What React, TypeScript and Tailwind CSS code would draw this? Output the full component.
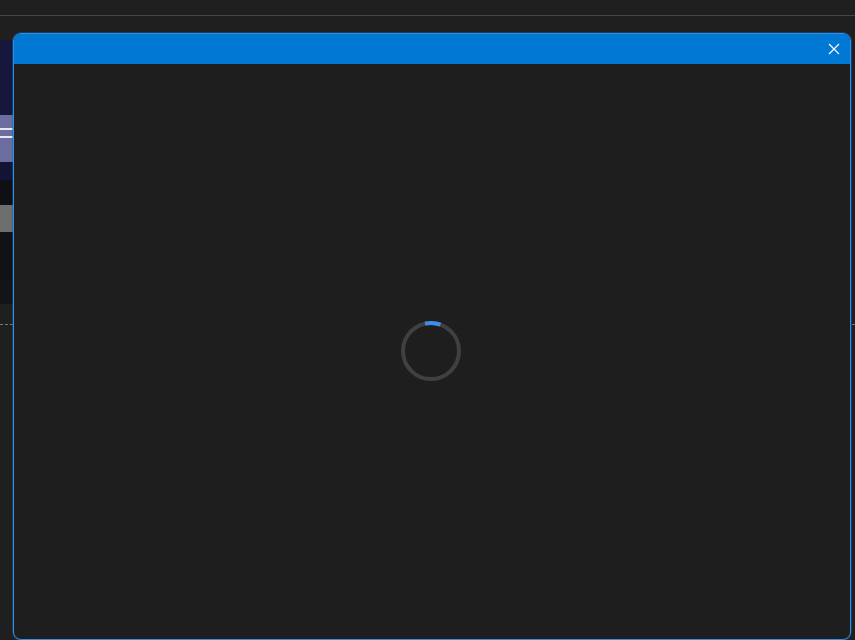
import React from 'react';

const Spinner = () => (
  <svg width="62" height="62" viewBox="0 0 62 62">
    <circle cx="31" cy="31" r="28" fill="none" stroke="#404040" strokeWidth="4" />
    <path d="M 25 3.6 A 28 28 0 0 1 40.5 4.7" fill="none" stroke="#3b8eea" strokeWidth="4" />
  </svg>
);

export default function App() {
  return (
    <div className="relative h-[640px] w-full overflow-hidden bg-[#1f1f1f] font-['Segoe_UI','Noto_Sans',sans-serif]">
      {/* Background app behind the dialog */}
      <div className="h-[16px] border-b border-[#454545] bg-[#1f1f1f]" />
      <div className="flex flex-col pt-[24px]">
        <div className="w-[60px]">
          <div className="h-[75px] bg-[#15173c]" />
          <div className="flex h-[47px] flex-col gap-[6px] bg-[#6a6d9e] pt-[13px]">
            <div className="h-[2px] bg-[#e5e6f0]" />
            <div className="h-[2px] bg-[#e5e6f0]" />
          </div>
          <div className="h-[18px] bg-[#121436]" />
          <div className="h-[25px] bg-[#101014]" />
          <div className="h-[27px] bg-[#6e6e6e]" />
          <div className="h-[24px] bg-[#121216]" />
          <div className="h-[24px] bg-[#121216]" />
          <div className="h-[24px] bg-[#141418]" />
        </div>
        <div className="mt-[20px] border-t border-dashed border-[#777]" />
      </div>

      {/* Dialog */}
      <div className="absolute left-[13px] top-[33px] flex h-[607px] w-[838px] flex-col overflow-hidden rounded-[8px] border border-[#3a8fdc] bg-[#1e1e1e] shadow-[0_0_0_1px_rgba(0,100,190,0.45)]">
        <div className="flex h-[30px] shrink-0 items-center justify-end bg-[#0078d4] pr-[10px]">
          <svg width="12" height="12" viewBox="0 0 12 12">
            <path d="M1 1 L11 11 M11 1 L1 11" stroke="#ffffff" strokeWidth="1.2" />
          </svg>
        </div>
        <div className="flex flex-1 justify-center pt-[256px] pr-[2px]">
          <div className="h-fit">
            <Spinner />
          </div>
        </div>
      </div>
    </div>
  );
}
